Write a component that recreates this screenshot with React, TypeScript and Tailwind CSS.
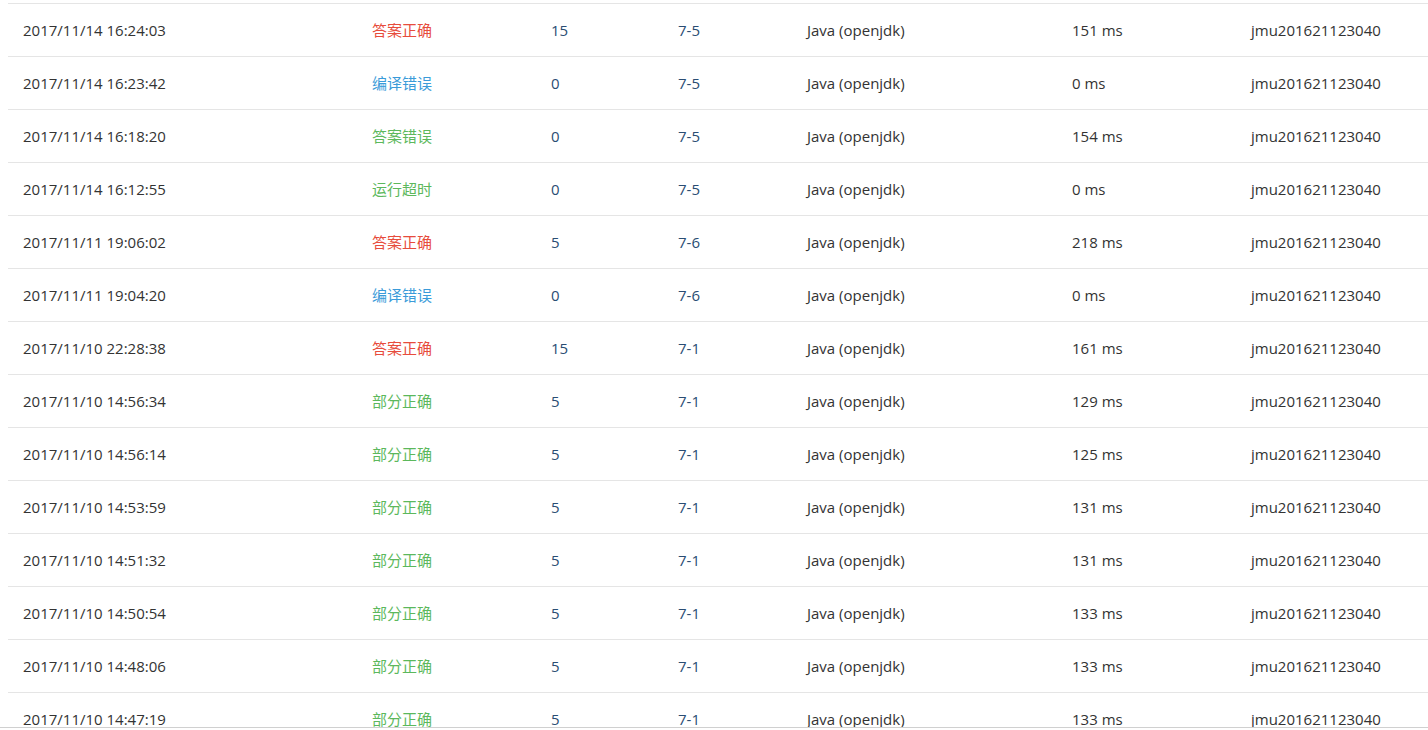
const rows: [string, string, string, string, string, string][] = [
  ['2017/11/14 16:24:03', '答案正确', '15', '7-5', '151 ms', 'r'],
  ['2017/11/14 16:23:42', '编译错误', '0', '7-5', '0 ms', 'b'],
  ['2017/11/14 16:18:20', '答案错误', '0', '7-5', '154 ms', 'g'],
  ['2017/11/14 16:12:55', '运行超时', '0', '7-5', '0 ms', 'g'],
  ['2017/11/11 19:06:02', '答案正确', '5', '7-6', '218 ms', 'r'],
  ['2017/11/11 19:04:20', '编译错误', '0', '7-6', '0 ms', 'b'],
  ['2017/11/10 22:28:38', '答案正确', '15', '7-1', '161 ms', 'r'],
  ['2017/11/10 14:56:34', '部分正确', '5', '7-1', '129 ms', 'g'],
  ['2017/11/10 14:56:14', '部分正确', '5', '7-1', '125 ms', 'g'],
  ['2017/11/10 14:53:59', '部分正确', '5', '7-1', '131 ms', 'g'],
  ['2017/11/10 14:51:32', '部分正确', '5', '7-1', '131 ms', 'g'],
  ['2017/11/10 14:50:54', '部分正确', '5', '7-1', '133 ms', 'g'],
  ['2017/11/10 14:48:06', '部分正确', '5', '7-1', '133 ms', 'g'],
  ['2017/11/10 14:47:19', '部分正确', '5', '7-1', '133 ms', 'g'],
]

const STATUS: Record<string, string> = {
  r: 'text-[#e74c3c]',
  b: 'text-[#3a9bd9]',
  g: 'text-[#5cb85c]',
}

export default function App() {
  return (
    <div className="h-[730px] overflow-hidden bg-white relative" style={{ fontFamily: '"Open Sans", "Noto Sans CJK SC", sans-serif' }}>
      <div className="pl-2 pt-[3px] text-[15px] text-[#333]">
        {rows.map(r => (
          <div key={r[0]} className="grid grid-cols-[349px_179px_127px_129px_265px_179px_1fr] items-center h-[53px] border-t border-[#e5e5e5]">
            <span className="pl-[15px]">{r[0]}</span>
            <span className={`pl-[15px] ${STATUS[r[5]]}`}>{r[1]}</span>
            <span className="pl-[15px] text-[#2a4d73]">{r[2]}</span>
            <span className="pl-[15px] text-[#2a4d73]">{r[3]}</span>
            <span className="pl-[15px]">Java (openjdk)</span>
            <span className="pl-[15px]">{r[4]}</span>
            <span className="pl-[15px]">jmu201621123040</span>
          </div>
        ))}
      </div>
      <div className="absolute left-0 right-0 top-[727px] border-t border-[#d0d0d0] h-[3px] bg-white" />
    </div>
  )
}
